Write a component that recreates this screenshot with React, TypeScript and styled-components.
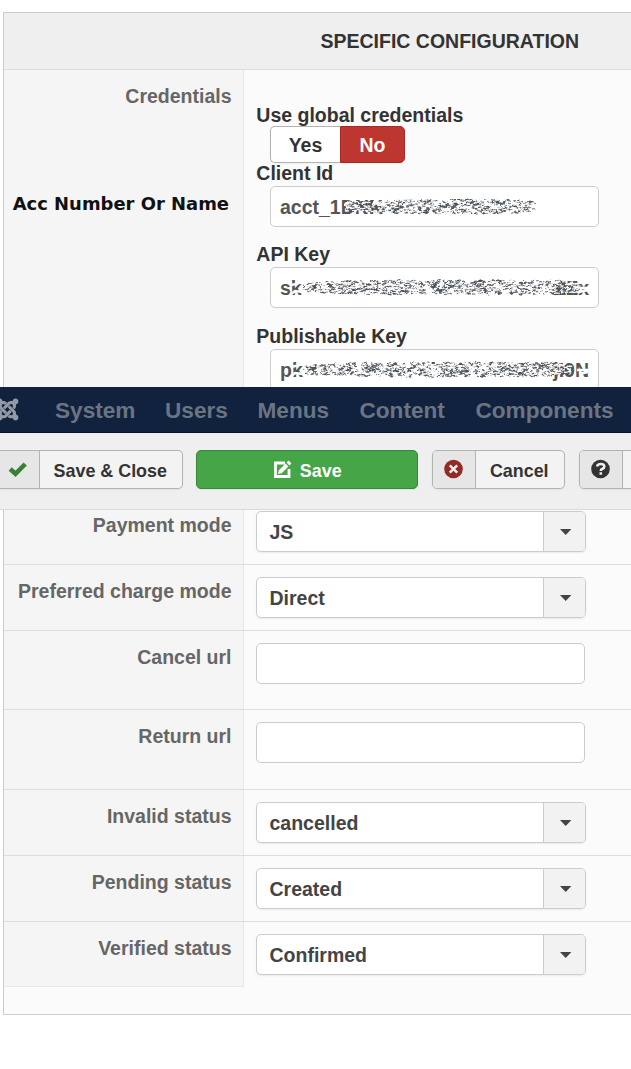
import React from 'react';
import styled, { createGlobalStyle } from 'styled-components';
import { FaJoomla } from 'react-icons/fa';

const Global = createGlobalStyle`
  * { box-sizing: border-box; }
  html, body { margin: 0; background: #fff; overflow: hidden; }
  body { font: bold 19.5px/24px "Liberation Sans", Arial, sans-serif; color: #333; }
`;

const Page = styled.main`
  width: 631px;
  height: 1069px;
  padding-top: 12px;
  overflow: hidden;
`;
const Panel = styled.section<{ $first?: boolean; $height: number }>`
  height: ${p => p.$height}px;
  margin-left: 3px;
  overflow: hidden;
  background: #fbfbfb;
  border-left: 1px solid #ccc;
  ${p => (p.$first ? 'border-top' : 'border-bottom')}: 1px solid #ccc;
`;
const Heading = styled.header`
  height: 57px;
  padding: 16px 0 0 316.5px;
  background: #efefef;
  border-bottom: 1px solid #ddd;
  white-space: nowrap;
`;
const Row = styled.div<{ $height: number; $last?: boolean }>`
  display: grid;
  grid-template-columns: 240px 1fr;
  height: ${p => p.$height}px;
  border-bottom: ${p => (p.$last ? 0 : 1)}px solid #ddd;
`;
const LabelCell = styled.div<{ $top: number; $last?: boolean }>`
  padding: ${p => p.$top}px 11.5px 0 0;
  text-align: right;
  white-space: nowrap;
  color: #666;
  background: #f5f5f5;
  border-right: 1px solid #e8e8e8;
  border-bottom: ${p => (p.$last ? 1 : 0)}px solid #e8e8e8;
`;
const Account = styled.div`
  margin: 84px 2.5px 0 0;
  font: bold 17.95px/24px "DejaVu Sans", sans-serif;
  color: #111;
`;
const FieldCell = styled.div<{ $top: number }>`
  padding: ${p => p.$top}px 0 0 12px;
`;
const FieldTitle = styled.div<{ $gap?: number }>`
  height: 23px;
  line-height: 21px;
  margin-top: ${p => p.$gap ?? 0}px;
  padding-left: 0.3px;
`;
const Toggle = styled.div`
  display: flex;
  width: 135px;
  height: 37px;
  margin: -2px 0 0 14px;
`;
const Choice = styled.button<{ $active?: boolean }>`
  width: ${p => (p.$active ? 65 : 70)}px;
  padding: 0;
  font: inherit;
  color: ${p => (p.$active ? '#fff' : '#333')};
  background: ${p => (p.$active ? '#bd362f' : '#fff')};
  border: 1px solid ${p => (p.$active ? '#a52b25' : '#b3b3b3')};
  border-right-width: ${p => (p.$active ? 1 : 0)}px;
  border-radius: ${p => (p.$active ? '0 5px 5px 0' : '5px 0 0 5px')};
  box-shadow: 0 1px 2px rgba(0, 0, 0, .05);
`;
const Box = styled.div<{ $inset?: boolean }>`
  width: 329px;
  height: 41px;
  margin-left: ${p => (p.$inset ? 14 : 0)}px;
  padding: 0 0 0 9px;
  overflow: hidden;
  line-height: 41px;
  color: #555;
  background: #fff;
  border: 1px solid #ccc;
  border-radius: 5px;
  svg { display: block; }
`;
const SelectBox = styled.div`
  display: flex;
  width: 330px;
  height: 41px;
  line-height: 41px;
  color: #444;
  background: #fff;
  border: 1px solid #ccc;
  border-radius: 5px;
  box-shadow: 0 1px 2px rgba(0, 0, 0, .07);
  overflow: hidden;
`;
const Value = styled.span`
  flex: 1;
  padding-left: 12.5px;
`;
const Arrow = styled.span`
  width: 42px;
  padding: 17px 0 0 16px;
  background: #f2f2f2;
  border-left: 1px solid #ccc;
  svg { display: block; }
`;
const Nav = styled.nav`
  display: flex;
  height: 46px;
  background: #10223e;
  border-bottom: 1px solid #06132a;
  font-size: 22.6px;
  line-height: 47px;
  color: #6b7482;
  white-space: nowrap;
`;
const Logo = styled.div`
  flex: none;
  width: 55px;
  height: 45px;
  padding-top: 10px;
  color: #929aa6;
  svg { display: block; margin-left: -5px; }
`;
const NavItem = styled.a<{ $width: number }>`
  flex: none;
  width: ${p => p.$width}px;
`;
const Toolbar = styled.div`
  display: flex;
  height: 77px;
  padding-top: 17px;
  background: #efefef;
  border-bottom: 1px solid #d9d9d9;
  font-size: 17.9px;
`;
const ToolButton = styled.button<{ $width: number; $gap: number; $primary?: boolean; $cut?: boolean }>`
  flex: none;
  display: flex;
  justify-content: ${p => (p.$primary ? 'center' : 'flex-start')};
  align-items: center;
  width: ${p => p.$width}px;
  height: 39px;
  margin: 0 ${p => p.$gap}px 0 0;
  padding: 0;
  overflow: hidden;
  font: inherit;
  color: ${p => (p.$primary ? '#fff' : '#333')};
  background: ${p => (p.$primary ? '#46a546' : '#f3f3f3')};
  border: 1px solid ${p => (p.$primary ? '#37873a' : '#b3b3b3')};
  border-left-width: ${p => (p.$cut ? 0 : 1)}px;
  border-radius: ${p => (p.$cut ? '0 5px 5px 0' : '5px')};
  box-shadow: 0 1px 2px rgba(0, 0, 0, .06);
`;
const IconPart = styled.span<{ $width: number }>`
  flex: none;
  width: ${p => p.$width}px;
  height: 37px;
  background: #e6e6e6;
  border-right: 1px solid #b3b3b3;
  svg { display: block; }
`;
const ButtonText = styled.span`
  flex: 1;
  padding: 2px 1.5px 0 0;
  text-align: center;
`;
const PrimaryText = styled.span`
  padding: 2px 0 0 7.5px;
`;

// Contour-like marks that hide a secret value.
function scribble(start: number, end: number, seed: number) {
  let s = seed;
  const rnd = () => {
    s = (s * 1664525 + 1013904223) >>> 0;
    return s / 4294967296;
  };
  let dark = '';
  let light = '';
  for (let x = start; x < end; x += 1) {
    const edge = Math.max(0, Math.min(1, (x - start) / 60, (end - x) / 25));
    for (let i = 0; i < 6; i++) {
      const y = 19.5 + (rnd() - 0.5) * (8 + edge * 6);
      const d = `M${x.toFixed(1)} ${y.toFixed(1)}q${(rnd() * 3).toFixed(1)} ${(rnd() * 4 - 2).toFixed(1)} ${(1 + rnd() * 3).toFixed(1)} ${(rnd() * 2 - 1).toFixed(1)}`;
      if (rnd() > 0.35) dark += d;
      else light += d;
    }
  }
  return { dark, light };
}

type SecretProps = { text: string; tail?: string; start: number; end: number; seed: number };
function Secret({ text, tail, start, end, seed }: SecretProps) {
  const marks = scribble(start, end, seed);
  return (
    <Box $inset>
      <svg width="318" height="39" viewBox="0 0 318 39">
        <text x="0" y="27" fill="#555">{text}</text>
        {tail && <text x="309" y="27" textAnchor="end" fill="#555">{tail}</text>}
        {tail && <path d="M8 13l4 4 7-2M10 27l5-4 8 1M19 29h15M297 20h11M299 24l9-2" stroke="#fff" strokeWidth="2.4" fill="none" />}
        <path d={marks.dark} fill="none" stroke="#484e55" strokeWidth="1" />
        <path d={marks.light} fill="none" stroke="#fff" strokeWidth="1.1" />
      </svg>
    </Box>
  );
}

function Select({ value }: { value: string }) {
  return (
    <SelectBox>
      <Value>{value}</Value>
      <Arrow><svg width="12" height="7"><path d="M0 0h11.4L5.7 6z" fill="#444" /></svg></Arrow>
    </SelectBox>
  );
}

const statuses = [
  ['Invalid status', 'cancelled'],
  ['Pending status', 'Created'],
];

export default function App() {
  return (
    <>
      <Global />
      <Page>
        <Panel $first $height={375}>
          <Heading>SPECIFIC CONFIGURATION</Heading>
          <Row $height={330}>
            <LabelCell $top={14}>Credentials<Account>Acc Number Or Name</Account></LabelCell>
            <FieldCell $top={34}>
              <FieldTitle $gap={1}>Use global credentials</FieldTitle>
              <Toggle><Choice>Yes</Choice><Choice $active>No</Choice></Toggle>
              <FieldTitle>Client Id</FieldTitle>
              <Secret text="acct_1DNK" start={64} end={253} seed={17} />
              <FieldTitle $gap={17}>API Key</FieldTitle>
              <Secret text="sk_" tail="ZZx" start={23} end={298} seed={91} />
              <FieldTitle $gap={18}>Publishable Key</FieldTitle>
              <Secret text="pk_" tail="jI9N" start={23} end={290} seed={53} />
            </FieldCell>
          </Row>
        </Panel>
        <Nav>
          <Logo><FaJoomla size={25} /></Logo>
          <NavItem $width={110}>System</NavItem>
          <NavItem $width={92.5}>Users</NavItem>
          <NavItem $width={102}>Menus</NavItem>
          <NavItem $width={116}>Content</NavItem>
          <NavItem $width={150}>Components</NavItem>
        </Nav>
        <Toolbar>
          <ToolButton $width={183} $gap={13} $cut>
            <IconPart $width={40}>
              <svg width="39" height="37"><path d="m10.2 18 5.3 4.8 9.7-9.8" fill="none" stroke="#378137" strokeWidth="4.6" /></svg>
            </IconPart>
            <ButtonText>Save &amp; Close</ButtonText>
          </ToolButton>
          <ToolButton $width={222} $gap={14} $primary>
            <svg width="20" height="19" viewBox="-1 0 20 19" fill="none" stroke="#fff">
              <path d="M12 3H2.5v13.5H16V9" strokeWidth="2.8" />
              <path d="m7 12 7-7" strokeWidth="4" />
              <path d="m15 4 2-2" strokeWidth="4" />
              <path d="m5 14 1-4 3 3z" fill="#fff" stroke="none" />
            </svg>
            <PrimaryText>Save</PrimaryText>
          </ToolButton>
          <ToolButton $width={133} $gap={14}>
            <IconPart $width={43}>
              <svg width="42" height="37"><circle cx="20.5" cy="18" r="9.3" fill="#942a25" /><path d="m16.8 14.3 7.4 7.4m0-7.4-7.4 7.4" stroke="#eee" strokeWidth="2.5" /></svg>
            </IconPart>
            <ButtonText>Cancel</ButtonText>
          </ToolButton>
          <ToolButton $width={130} $gap={0}>
            <IconPart $width={43}>
              <svg width="42" height="37"><circle cx="20.5" cy="18" r="9.3" fill="#333" /><path d="M17 15.5q.5-2.5 3.8-2.5 3.5 0 3.5 2.5 0 1.5-1.8 2.2-1.7.6-1.7 2.3m0 1.3v2.5" fill="none" stroke="#eee" strokeWidth="2.6" /></svg>
            </IconPart>
          </ToolButton>
        </Toolbar>
        <Panel $height={505}>
          <Row $height={55}>
            <LabelCell $top={3}>Payment mode</LabelCell>
            <FieldCell $top={1}><Select value="JS" /></FieldCell>
          </Row>
          <Row $height={66}>
            <LabelCell $top={14}>Preferred charge mode</LabelCell>
            <FieldCell $top={12}><Select value="Direct" /></FieldCell>
          </Row>
          <Row $height={79}>
            <LabelCell $top={14}>Cancel url</LabelCell>
            <FieldCell $top={12}><Box /></FieldCell>
          </Row>
          <Row $height={80}>
            <LabelCell $top={14}>Return url</LabelCell>
            <FieldCell $top={12}><Box /></FieldCell>
          </Row>
          {statuses.map(([label, value]) => (
            <Row $height={66} key={label}>
              <LabelCell $top={14}>{label}</LabelCell>
              <FieldCell $top={12}><Select value={value} /></FieldCell>
            </Row>
          ))}
          <Row $height={65} $last>
            <LabelCell $top={14} $last>Verified status</LabelCell>
            <FieldCell $top={12}><Select value="Confirmed" /></FieldCell>
          </Row>
        </Panel>
      </Page>
    </>
  );
}
